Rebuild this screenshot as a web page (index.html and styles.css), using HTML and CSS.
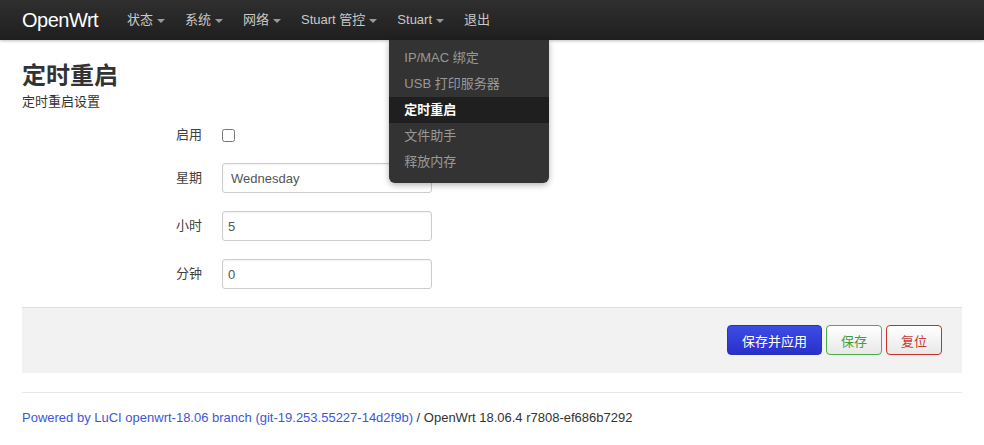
FILE: index.html
```html
<!DOCTYPE html>
<html lang="zh">
<head>
<meta charset="utf-8">
<title>定时重启 - OpenWrt</title>
<link rel="stylesheet" href="styles.css">
</head>
<body>
<header class="topbar">
  <div class="topbar-inner">
    <a class="brand" href="#">OpenWrt</a>
    <ul class="nav">
      <li class="nav-item"><a class="nav-link" href="#">状态<span class="caret"></span></a></li>
      <li class="nav-item"><a class="nav-link" href="#">系统<span class="caret"></span></a></li>
      <li class="nav-item"><a class="nav-link" href="#">网络<span class="caret"></span></a></li>
      <li class="nav-item"><a class="nav-link" href="#">Stuart 管控<span class="caret"></span></a></li>
      <li class="nav-item open">
        <a class="nav-link" href="#">Stuart<span class="caret"></span></a>
        <ul class="dropdown">
          <li><a href="#">IP/MAC 绑定</a></li>
          <li><a href="#">USB 打印服务器</a></li>
          <li class="active"><a href="#">定时重启</a></li>
          <li><a href="#">文件助手</a></li>
          <li><a href="#">释放内存</a></li>
        </ul>
      </li>
      <li class="nav-item"><a class="nav-link" href="#">退出</a></li>
    </ul>
  </div>
</header>

<main class="container">
  <h2 class="page-title">定时重启</h2>
  <div class="page-desc">定时重启设置</div>

  <form class="form">
    <div class="row row-check">
      <label class="row-label">启用</label>
      <div class="row-control"><input type="checkbox" class="checkbox"></div>
    </div>
    <div class="row">
      <label class="row-label">星期</label>
      <div class="row-control">
        <select class="field select">
          <option>Wednesday</option>
        </select>
      </div>
    </div>
    <div class="row">
      <label class="row-label">小时</label>
      <div class="row-control"><input class="field" type="text" value="5"></div>
    </div>
    <div class="row">
      <label class="row-label">分钟</label>
      <div class="row-control"><input class="field" type="text" value="0"></div>
    </div>
  </form>

  <div class="actions">
    <button class="btn btn-primary" type="button">保存并应用</button>
    <button class="btn btn-save" type="button">保存</button>
    <button class="btn btn-reset" type="button">复位</button>
  </div>

  <hr class="sep">

  <footer class="footer">
    <a href="#">Powered by LuCI openwrt-18.06 branch (git-19.253.55227-14d2f9b)</a> / OpenWrt 18.06.4 r7808-ef686b7292
  </footer>
</main>
</body>
</html>
```

FILE: styles.css
```css
* { box-sizing: border-box; }

body {
  margin: 0;
  font-family: "Liberation Sans", "Noto Sans CJK SC", sans-serif;
  font-size: 13px;
  line-height: 18px;
  color: #404040;
  background: #fff;
}

a { text-decoration: none; }

/* top bar */
.topbar {
  height: 40px;
  background: linear-gradient(#2f2f2f, #1f1f1f);
  box-shadow: 0 1px 3px rgba(0,0,0,0.25);
  position: relative;
  z-index: 10;
}
.topbar-inner {
  display: flex;
  align-items: stretch;
  height: 40px;
  padding-left: 22px;
}
.brand {
  width: 95px;
  color: #fff;
  font-size: 20px;
  font-weight: 200;
  line-height: 40px;
  letter-spacing: -0.5px;
}
.nav {
  display: flex;
  list-style: none;
  margin: 0;
  padding: 0;
}
.nav-item { position: relative; }
.nav-link {
  display: flex;
  align-items: center;
  height: 40px;
  padding: 0 10px;
  color: #c8c8c8;
  font-size: 13px;
}
.caret {
  display: inline-block;
  width: 0;
  height: 0;
  margin-left: 4px;
  margin-top: 2px;
  border-left: 4px solid transparent;
  border-right: 4px solid transparent;
  border-top: 4px solid #9a9a9a;
}

/* dropdown */
.dropdown {
  position: absolute;
  top: 40px;
  left: 2px;
  width: 160px;
  margin: 0;
  padding: 5px 0 8px;
  list-style: none;
  background: #333;
  border-radius: 0 0 6px 6px;
  box-shadow: 0 2px 6px rgba(0,0,0,0.3);
}
.dropdown a {
  display: block;
  padding: 0 15px;
  height: 26px;
  line-height: 26px;
  color: #999;
  font-size: 13px;
}
.dropdown .active a {
  background: #1f1f1f;
  color: #fff;
  font-weight: bold;
}

/* content */
.container {
  width: 940px;
  margin: 0 22px;
  padding-top: 18px;
}
.page-title {
  margin: 0;
  font-size: 24px;
  line-height: 36px;
  font-weight: bold;
  color: #333;
}
.page-desc {
  line-height: 16px;
  color: #333;
}

.form { padding-top: 13px; }
.row {
  display: grid;
  grid-template-columns: 180px 210px;
  column-gap: 20px;
  align-items: center;
  height: 30px;
  margin-bottom: 18px;
}
.row-check {
  height: 24px;
  margin-bottom: 16px;
}
.row-label {
  text-align: right;
  color: #404040;
}
.row-control { display: flex; align-items: center; }
.checkbox {
  margin: 0;
  width: 13px;
  height: 13px;
}
.field {
  width: 210px;
  height: 30px;
  border: 1px solid #ccc;
  border-radius: 3px;
  padding: 4px 5px;
  font-family: inherit;
  font-size: 13px;
  color: #555;
  background: #fff;
  box-shadow: inset 0 1px 2px rgba(0,0,0,0.06);
}
.select {
  padding-left: 8px;
  appearance: none;
  -webkit-appearance: none;
}

/* actions */
.actions {
  display: flex;
  justify-content: flex-end;
  gap: 4px;
  height: 66px;
  margin-top: 0;
  padding: 17px 20px 0 0;
  background: #f2f2f2;
  border-top: 1px solid #ddd;
}
.btn {
  height: 30px;
  padding: 0 14px;
  font-family: inherit;
  font-size: 13px;
  border-radius: 4px;
  border: 1px solid #ccc;
  background: linear-gradient(#ffffff, #e8e8e8);
  cursor: pointer;
}
.btn-primary {
  color: #fff;
  background: linear-gradient(#3a4ee3, #2a2fcb);
  border-color: #2a33bb;
}
.btn-save {
  color: #3e9d3e;
  border-color: #4cae4c;
}
.btn-reset {
  color: #c43c35;
  border-color: #c9302c;
}

.sep {
  margin: 19px 0 16px;
  border: 0;
  border-top: 1px solid #e8e8e8;
}
.footer {
  line-height: 18px;
  color: #333;
}
.footer a { color: #3d57d8; }
```
